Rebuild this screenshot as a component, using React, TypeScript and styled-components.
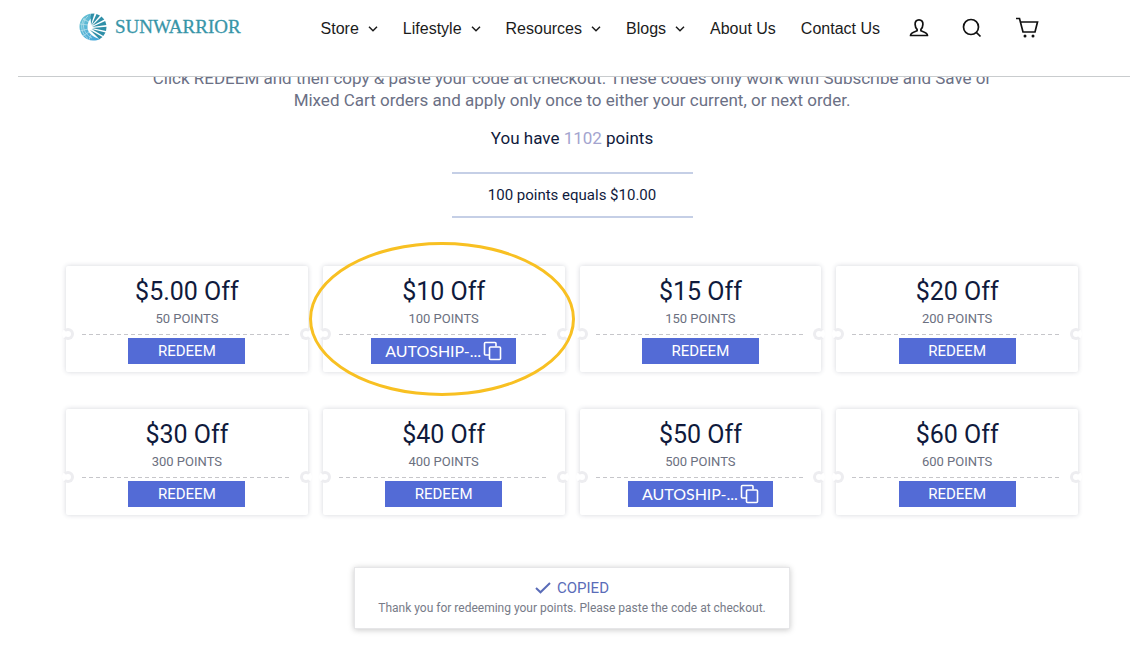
import React from "react";
import styled, { createGlobalStyle } from "styled-components";

const GlobalStyle = createGlobalStyle`
  *, *::before, *::after { box-sizing: border-box; }
  body { margin: 0; background: #fff; font-family: Roboto, "Liberation Sans", sans-serif; color: #0f1a3c; }
`;

const Header = styled.header`
  position: sticky;
  top: 0;
  z-index: 2;
  display: flex;
  align-items: center;
  margin: 0 14px 0 18px;
  padding: 0 91px 19px 61px;
  height: 77px;
  background: #fff;
  border-bottom: 1px solid #c9ccce;
`;

const Logo = styled.a`
  display: flex;
  align-items: center;
  gap: 8px;
  padding-bottom: 4px;
  font: 19px/24px "Liberation Serif", serif;
  color: #3795a8;
  text-decoration: none;
  -webkit-text-stroke: 0.3px #3795a8;
`;

const Nav = styled.nav`
  display: flex;
  align-items: center;
  gap: 25px;
  margin-left: auto;
`;

const NavLink = styled.a`
  display: flex;
  align-items: center;
  gap: 9px;
  font: 16px/24px "Liberation Sans", sans-serif;
  color: #1b1b1b;
  text-decoration: none;
  white-space: nowrap;
`;

const Tools = styled.div`
  display: flex;
  align-items: center;
  gap: 33px;
  margin-left: 29px;
  padding-bottom: 2px;
`;

const IconButton = styled.button`
  display: flex;
  padding: 0;
  border: 0;
  background: none;
  color: #111;
  cursor: pointer;
`;

const Main = styled.main`
  display: flex;
  flex-direction: column;
  align-items: center;
  margin-top: -10px;
  padding: 0 66px 40px;
  text-align: center;
`;

const Intro = styled.p`
  max-width: 870px;
  margin: 0;
  font-size: 17px;
  line-height: 22px;
  color: #6b7085;
`;

const Balance = styled.p`
  margin: 16px 0 0;
  font-size: 17px;
  line-height: 22px;
`;

const Count = styled.span`
  color: #a3a4cf;
`;

const Rate = styled.p`
  width: 241px;
  margin: 23px 0 0;
  border: solid #c5cfe6;
  border-width: 2px 0;
  font-size: 15px;
  line-height: 42px;
`;

const Grid = styled.ul`
  display: grid;
  grid-template-columns: repeat(4, 1fr);
  gap: 37px 15px;
  width: 100%;
  margin: 48px 0 0;
  padding: 0;
  list-style: none;
`;

const Card = styled.li`
  position: relative;
  display: flex;
  flex-direction: column;
  align-items: center;
  padding: 10px 0 8px;
  border-radius: 2px;
  background: #fff;
  box-shadow: 0 0 5px rgba(40, 50, 80, 0.2);
`;

const Amount = styled.h2`
  margin: 0;
  font-size: 25px;
  font-weight: 400;
  line-height: 32px;
`;

const Cost = styled.p`
  margin: 2px 0 0;
  font-size: 13px;
  line-height: 18px;
  color: #6b7080;
`;

const Perforation = styled.div`
  align-self: stretch;
  height: 1px;
  margin: 6px 16px 3px;
  background: repeating-linear-gradient(90deg, #c6c6ca 0 4px, transparent 4px 7px);
`;

const Notch = styled.span<{ $side: "left" | "right" }>`
  position: absolute;
  top: 62px;
  ${(p) => p.$side}: -4px;
  width: 12px;
  height: 12px;
  border: 3px solid #ededf0;
  border-${(p) => p.$side}-color: #fff;
  border-radius: 50%;
  background: #fff;
`;

const Action = styled.button<{ $wide?: boolean }>`
  display: flex;
  align-items: center;
  justify-content: center;
  gap: 2px;
  width: ${(p) => (p.$wide ? 145 : 117)}px;
  height: 26px;
  padding: 0;
  border: 0;
  background: #536bd6;
  color: #fff;
  font: ${(p) => (p.$wide ? "16px/24px Lato" : "15px/24px Roboto")}, sans-serif;
  cursor: pointer;
`;

const Highlight = styled.span`
  position: absolute;
  inset: -24px -10px -24px -14px;
  border: 3px solid #f8c022;
  border-radius: 50%;
  pointer-events: none;
  z-index: 1;
`;

const Toast = styled.div`
  margin-top: 52px;
  padding: 10px 23px;
  border: 1px solid #e6e6e8;
  background: #fff;
  box-shadow: 0 1px 6px rgba(0, 0, 0, 0.22);
`;

const ToastTitle = styled.p`
  display: flex;
  align-items: center;
  justify-content: center;
  gap: 6px;
  margin: 0;
  font-size: 15px;
  line-height: 20px;
  color: #5a6cb8;
`;

const ToastText = styled.p`
  margin: 0;
  font-size: 12px;
  line-height: 20px;
  color: #777b88;
`;

const Chevron = () => (
  <svg width="10" height="6" viewBox="0 0 10 6" fill="none" stroke="currentColor" strokeWidth="1.5" aria-hidden="true">
    <path d="M1 .8 5 4.8 9 .8" />
  </svg>
);

const SunMark = () => (
  <svg width="28" height="28" viewBox="0 0 28 28" aria-hidden="true">
    <defs>
      <linearGradient id="sun" x1="0" y1="0" x2="1" y2="1">
        <stop offset="0" stopColor="#6cc4d2" />
        <stop offset="1" stopColor="#3fa3da" />
      </linearGradient>
    </defs>
    <path d="M11 .8C4.500 2 .5 7.500.5 14S6 27.500 14 27.500C17 27.500 19 27 21 26 14 24 8.500 20 8.500 14 8.500 10 10 7 12.500 5Z" fill="url(#sun)" />
    <g fill="#2f8fa8">
      <path d="M12 12 11.500.7 15.500.6Z" />
      <path d="M12.500 12.500 17.500.9 21 2.400Z" />
      <path d="M13 13 22.500 3.500 25.300 6.500Z" />
      <path d="M13 14 26.200 8 27.400 12Z" />
      <path d="M13 15 27.500 13.800 27 18Z" />
      <path d="M12.500 16 26.500 19.500 24.300 23Z" />
      <path d="M11 17 23.500 24 20.500 26.200Z" />
    </g>
    <g stroke="#fff" strokeWidth=".8" fill="none" opacity=".55">
      <path d="M9 3C2 9 3 20 13 25M5.500 5C.5 12 2.500 21 9 25.500" />
      <path d="M1 11l8 1M1 18l8-2M4 23l6-4M10 27l2-5M4 6l6 3" />
    </g>
  </svg>
);

const UserIcon = () => (
  <svg width="20" height="20" viewBox="0 0 20 20" fill="none" stroke="currentColor" strokeWidth="1.7" strokeLinejoin="round" aria-hidden="true">
    <path d="M10 1.800C7.300 1.800 5.900 3.800 6.100 6.400 6.200 8.600 7 10.400 8.100 11.400V12.800C6 13.800 1.800 14.200 1.500 17.500H18.500C18.200 14.200 14 13.800 11.900 12.800V11.400C13 10.400 13.800 8.600 13.900 6.400 14.100 3.800 12.700 1.800 10 1.800Z" />
  </svg>
);

const SearchIcon = () => (
  <svg width="20" height="20" viewBox="0 0 20 20" fill="none" stroke="currentColor" strokeWidth="1.7" aria-hidden="true">
    <circle cx="9" cy="9" r="7.500" />
    <path d="m14.300 14.300 4.200 4.200" />
  </svg>
);

const CartIcon = () => (
  <svg width="24" height="22" viewBox="0 0 24 22" fill="none" stroke="currentColor" strokeWidth="1.7" aria-hidden="true">
    <path d="M1 1.500H4.500L8 15H20L22.500 5H5.500" />
    <circle cx="10" cy="19" r="1.500" fill="currentColor" stroke="none" />
    <circle cx="18" cy="19" r="1.500" fill="currentColor" stroke="none" />
  </svg>
);

const CopyIcon = () => (
  <svg width="19" height="20" viewBox="0 0 19 20" fill="none" stroke="currentColor" strokeWidth="1.6" strokeLinejoin="round" aria-hidden="true">
    <rect x="6.500" y="6" width="11" height="12.500" rx="1" />
    <path d="M6 14H2.500Q1.500 14 1.500 13V2.500Q1.500 1.500 2.500 1.500H12Q13 1.500 13 2.500V5.500" />
  </svg>
);

const CheckIcon = () => (
  <svg width="16" height="12" viewBox="0 0 16 12" fill="none" stroke="currentColor" strokeWidth="2" aria-hidden="true">
    <path d="M1 6 5.500 10.300 15 1" />
  </svg>
);

const links = [
  { label: "Store", menu: true },
  { label: "Lifestyle", menu: true },
  { label: "Resources", menu: true },
  { label: "Blogs", menu: true },
  { label: "About Us", menu: false },
  { label: "Contact Us", menu: false },
];

const rewards = [
  { amount: "$5.00", points: 50 },
  { amount: "$10", points: 100, code: "AUTOSHIP-...", highlighted: true },
  { amount: "$15", points: 150 },
  { amount: "$20", points: 200 },
  { amount: "$30", points: 300 },
  { amount: "$40", points: 400 },
  { amount: "$50", points: 500, code: "AUTOSHIP-..." },
  { amount: "$60", points: 600 },
];

export default function App() {
  return (
    <>
      <GlobalStyle />
      <Header>
        <Logo href="#">
          <SunMark />
          SUNWARRIOR
        </Logo>
        <Nav>
          {links.map((l) => (
            <NavLink href="#" key={l.label}>
              {l.label}
              {l.menu && <Chevron />}
            </NavLink>
          ))}
        </Nav>
        <Tools>
          <IconButton aria-label="Account"><UserIcon /></IconButton>
          <IconButton aria-label="Search"><SearchIcon /></IconButton>
          <IconButton aria-label="Cart"><CartIcon /></IconButton>
        </Tools>
      </Header>
      <Main>
        <Intro>
          Click REDEEM and then copy &amp; paste your code at checkout. These codes only work with Subscribe and Save or
          Mixed Cart orders and apply only once to either your current, or next order.
        </Intro>
        <Balance>
          You have <Count>1102</Count> points
        </Balance>
        <Rate>100 points equals $10.00</Rate>
        <Grid>
          {rewards.map((r) => (
            <Card key={r.points}>
              <Notch $side="left" />
              <Notch $side="right" />
              <Amount>{r.amount} Off</Amount>
              <Cost>{r.points} POINTS</Cost>
              <Perforation />
              {r.code ? (
                <Action $wide>
                  {r.code}
                  <CopyIcon />
                </Action>
              ) : (
                <Action>REDEEM</Action>
              )}
              {r.highlighted && <Highlight />}
            </Card>
          ))}
        </Grid>
        <Toast role="status">
          <ToastTitle>
            <CheckIcon />
            COPIED
          </ToastTitle>
          <ToastText>Thank you for redeeming your points. Please paste the code at checkout.</ToastText>
        </Toast>
      </Main>
    </>
  );
}
